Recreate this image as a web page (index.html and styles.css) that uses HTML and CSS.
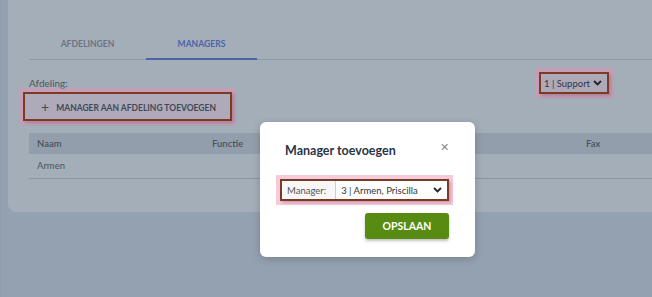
FILE: index.html
```html
<!DOCTYPE html>
<html lang="nl">
<head>
  <meta charset="UTF-8">
  <meta name="viewport" content="width=device-width, initial-scale=1.0">
  <title>Managers</title>
  <link rel="stylesheet" href="styles.css">
</head>
<body>
  <div class="page">
    <div class="card">
      <nav class="tabs">
        <span class="tab">Afdelingen</span>
        <span class="tab active">Managers</span>
      </nav>

      <div class="toolbar">
        <div class="left">
          <label class="field-label">Afdeling:</label>
          <button class="add-btn hl">
            <span class="plus">+</span> Manager aan afdeling toevoegen
          </button>
        </div>
        <div class="dept-select hl">
          <span>1 | Support</span>
          <svg width="9" height="6" viewBox="0 0 9 6"><path d="M1 1l3.5 3.5L8 1" fill="none" stroke="#1f2430" stroke-width="1.8"/></svg>
        </div>
      </div>

      <table class="grid">
        <thead>
          <tr>
            <th class="c-naam">Naam</th>
            <th class="c-functie">Functie</th>
            <th class="c-mid"></th>
            <th class="c-fax">Fax</th>
          </tr>
        </thead>
        <tbody>
          <tr>
            <td>Armen</td>
            <td></td>
            <td></td>
            <td></td>
          </tr>
        </tbody>
      </table>
    </div>

    <div class="modal">
      <div class="modal-head">
        <h3>Manager toevoegen</h3>
        <span class="close">&#x2715;</span>
      </div>
      <div class="input-group hl">
        <span class="addon">Manager:</span>
        <span class="select-val">3 | Armen, Priscilla</span>
        <svg width="9" height="6" viewBox="0 0 9 6"><path d="M1 1l3.5 3.5L8 1" fill="none" stroke="#1f2430" stroke-width="1.8"/></svg>
      </div>
      <div class="modal-foot">
        <button class="save-btn">Opslaan</button>
      </div>
    </div>
  </div>
</body>
</html>
```

FILE: styles.css
```css
* {
  box-sizing: border-box;
}
body {
  margin: 0;
  font-family: Lato, "Open Sans", sans-serif;
  background-color: #94a1b0;
}
.page {
  position: relative;
  height: 297px;
  padding-left: 7px;
  border-left: 1px solid #8e9cab;
}
.card {
  background-color: #a4aeb9;
  height: 212px;
  border-bottom-left-radius: 8px;
  padding: 33px 0 0 21px;
}
.tabs {
  display: flex;
  border-bottom: 1px solid #8f99a5;
}
.tab {
  padding: 6px 0 9px;
  text-align: center;
  font-size: 8.6px;
  font-weight: 700;
  text-transform: uppercase;
  color: #6b7482;
  width: 117px;
}
.tab.active {
  width: 111px;
  color: #4d64a8;
  border-bottom: 2px solid #4d64a8;
  margin-bottom: -1px;
}
.toolbar {
  display: flex;
  justify-content: space-between;
  align-items: flex-start;
  padding-right: 43px;
}
.left {
  display: flex;
  flex-direction: column;
  align-items: flex-start;
}
.field-label {
  font-size: 10px;
  color: #4b5462;
  margin-top: 17px;
  line-height: 13px;
}
.hl {
  border: 2px solid #7c3b20;
  box-shadow: 0 0 0 4px rgba(236, 140, 180, 0.45), 2px 2px 3px rgba(40, 30, 30, 0.35);
}
.add-btn {
  margin-left: -6px;
  margin-top: 2px;
  height: 29px;
  width: 209px;
  background-color: #aeaab9;
  font-family: inherit;
  font-size: 8.5px;
  font-weight: 700;
  text-transform: uppercase;
  white-space: nowrap;
  color: #404958;
  text-align: left;
  padding: 0 0 0 16px;
  cursor: pointer;
}
.plus {
  font-size: 14px;
  font-weight: 400;
  margin-right: 5px;
  vertical-align: -1px;
}
.dept-select {
  margin-top: 12px;
  height: 22px;
  width: 70px;
  display: flex;
  align-items: center;
  justify-content: space-between;
  padding: 0 5px 0 3px;
  font-size: 9.5px;
  white-space: nowrap;
  color: #2f3744;
  background-color: #aea9b8;
}
.grid {
  width: 100%;
  border-collapse: collapse;
  margin-top: 12px;
  font-size: 9.5px;
  color: #4a5361;
}
.grid th {
  background-color: #939eac;
  font-weight: 600;
  text-align: left;
  height: 21px;
  padding: 0 8px;
}
.grid td {
  height: 24px;
  padding: 0 8px;
  border-bottom: 1px solid #8c96a2;
}
.c-naam { width: 175px; }
.c-functie { width: 200px; }
.c-mid { width: 174px; }
.c-fax { text-align: left; }

.modal {
  position: absolute;
  left: 259px;
  top: 122px;
  width: 215px;
  height: 135px;
  background-color: #fff;
  border-radius: 6px;
  box-shadow: 0 2px 8px rgba(0, 0, 0, 0.2);
  padding: 20px 26px 0 20px;
}
.modal-head {
  display: flex;
  justify-content: space-between;
  align-items: flex-start;
  padding-left: 5px;
}
.modal-head h3 {
  margin: 0;
  font-size: 12.5px;
  font-weight: 700;
  color: #2b3447;
  line-height: 18px;
}
.close {
  font-size: 11px;
  color: #888;
  margin-top: -2px;
}
.input-group {
  display: flex;
  align-items: center;
  height: 22px;
  margin-top: 19px;
  font-size: 9.5px;
  color: #333;
  padding-right: 5px;
  background-color: #fff;
}
.addon {
  color: #555;
  background-color: #f7f7f7;
  padding: 0 9px 0 5px;
  height: 100%;
  display: flex;
  align-items: center;
  border-right: 1px solid #ccc;
}
.select-val {
  flex: 1;
  padding-left: 5px;
  color: #333;
}
.modal-foot {
  display: flex;
  justify-content: flex-end;
  margin-top: 12px;
}
.save-btn {
  width: 84px;
  height: 26px;
  border: none;
  border-radius: 3px;
  background-color: #588b12;
  color: #fff;
  font-family: inherit;
  font-size: 10.5px;
  font-weight: 700;
  text-transform: uppercase;
  box-shadow: 0 2px 3px rgba(0, 0, 0, 0.25);
  cursor: pointer;
}
```
